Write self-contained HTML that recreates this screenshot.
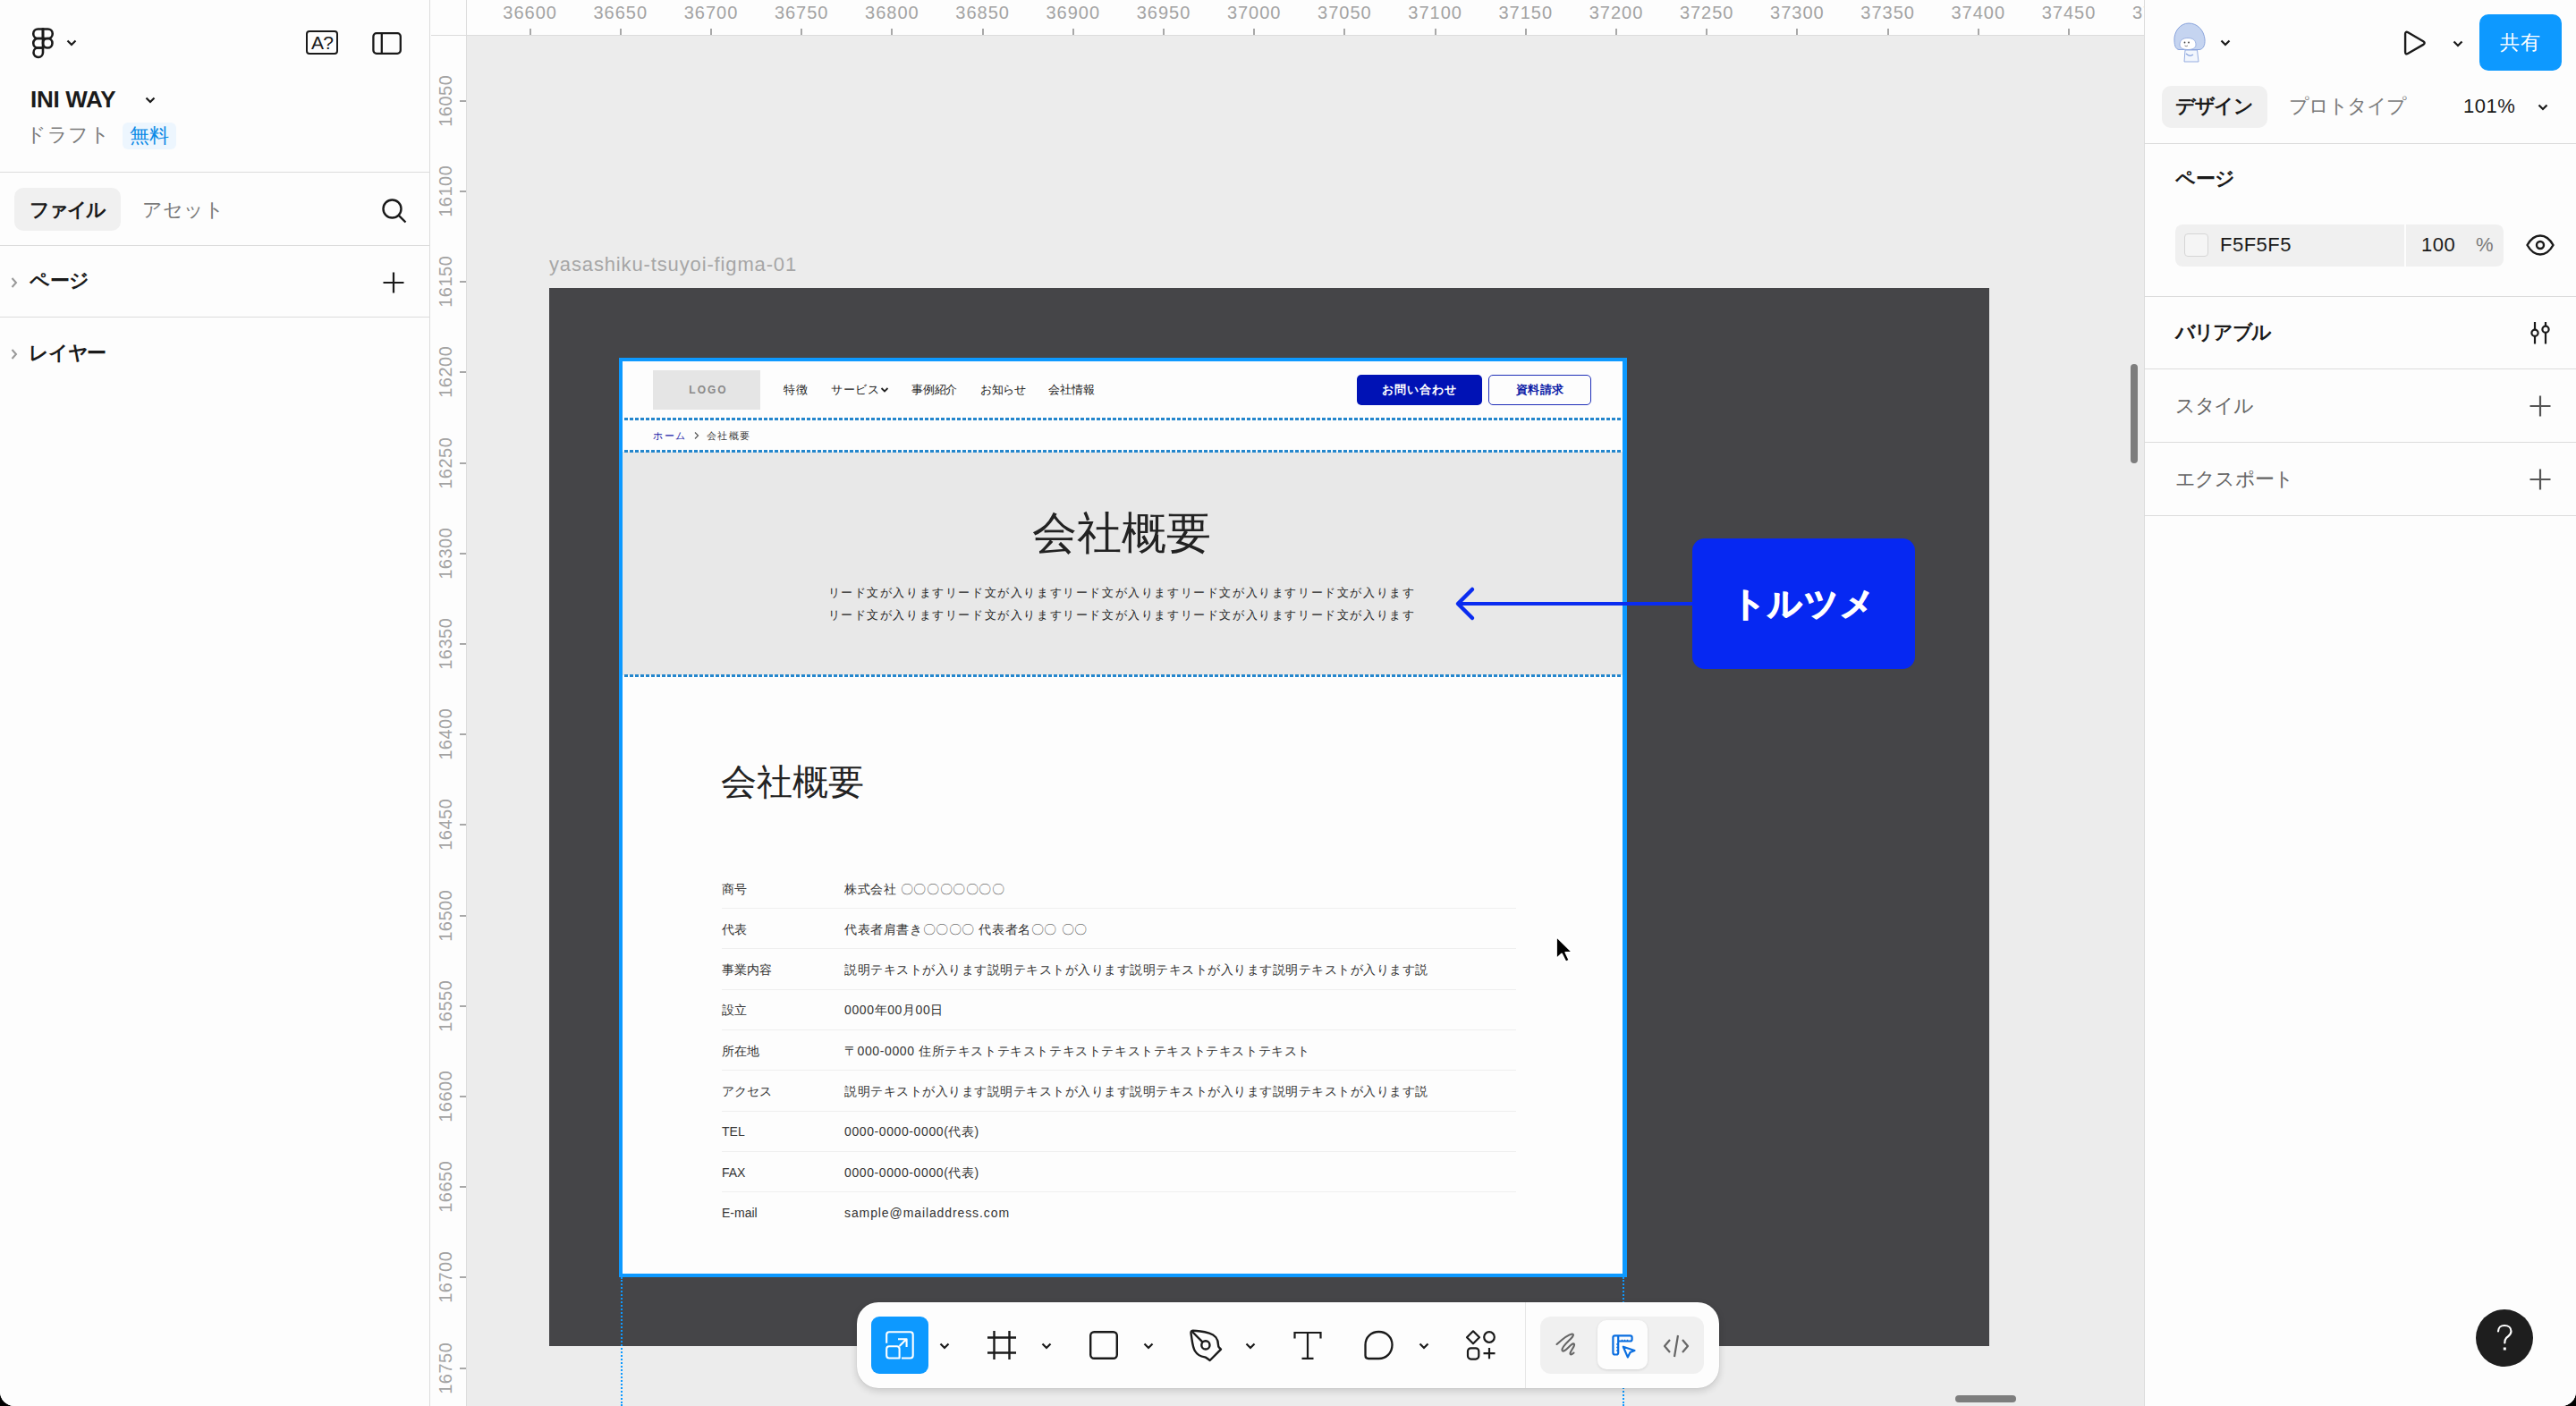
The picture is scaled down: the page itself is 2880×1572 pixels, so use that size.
<!DOCTYPE html>
<html><head><meta charset="utf-8">
<style>
*{box-sizing:border-box;margin:0;padding:0}
html,body{width:2880px;height:1572px;overflow:hidden;background:#000}
body{position:relative;font-family:"Liberation Sans",sans-serif;color:#1e1e1e}
.a{position:absolute}
#win{position:absolute;left:0;top:0;width:2880px;height:1572px;background:#fdfdfd;border-radius:0 0 16px 16px;overflow:hidden}
#canvas{position:absolute;left:522px;top:40px;width:1876px;height:1532px;background:#ececec;overflow:hidden}
.vl{position:absolute;width:1px;background:#dcdcdc}
.hl{position:absolute;height:1px;background:#dcdcdc}
.rx{position:absolute;top:4px;font-size:20px;line-height:20px;color:#a3a3a3;width:100px;text-align:center;letter-spacing:1px}
.tx{position:absolute;top:32px;width:2px;height:8px;background:#a8a8a8}
.ry{position:absolute;left:448px;font-size:20px;line-height:20px;color:#a3a3a3;width:100px;height:20px;text-align:center;transform:rotate(-90deg);letter-spacing:0.5px;text-indent:0.5px}
.ty{position:absolute;left:514px;height:2px;width:8px;background:#a8a8a8}
.dash{position:absolute;left:698px;width:1116px;height:2.5px;background:repeating-linear-gradient(90deg,#2486cc 0 4px,transparent 4px 6px)}
.nav{position:absolute;top:427px;font-size:12.5px;line-height:18px;color:#222;letter-spacing:0.5px}
.tl{position:absolute;left:807px;font-size:14px;line-height:20px;color:#333}
.tv{position:absolute;left:944px;font-size:14px;line-height:20px;color:#333;letter-spacing:0.6px;white-space:nowrap}
svg{display:block}
</style></head>
<body>
<div id="win">

<!-- LEFT PANEL -->
<div id="left" class="a" style="left:0;top:0;width:481px;height:1572px;background:#fdfdfd">
<svg class="a" style="left:35px;top:30px" width="26" height="36" viewBox="0 0 26 36"><g fill="none" stroke="#1a1a1a" stroke-width="2.6"><path d="M13 2.5 H7.5 A5.25 5.25 0 0 0 7.5 13 H13 Z"/><path d="M13 2.5 H18.5 A5.25 5.25 0 0 1 18.5 13 H13 Z"/><path d="M13 13 H7.5 A5.25 5.25 0 0 0 7.5 23.5 H13 Z"/><circle cx="18.25" cy="18.25" r="5.25"/><path d="M13 23.5 H7.5 A5.25 5.25 0 1 0 13 28.75 Z"/></g></svg>
<svg class="a" style="left:73px;top:42px" width="14" height="12" viewBox="0 0 14 12"><path d="M2.5 3.5 L7 8 L11.5 3.5" fill="none" stroke="#1a1a1a" stroke-width="2.2"/></svg>
<div class="a" style="left:342px;top:34px;width:36px;height:27px;border:2.4px solid #1a1a1a;border-radius:4px;font-size:21px;line-height:23px;text-align:center;color:#1a1a1a;letter-spacing:-0.8px">A?</div>
<svg class="a" style="left:414px;top:34px" width="36" height="28" viewBox="0 0 36 28"><rect x="3.4" y="3.2" width="30.4" height="22.6" rx="3.5" fill="none" stroke="#1a1a1a" stroke-width="2.3"/><path d="M12.8 3.2 V25.8" stroke="#1a1a1a" stroke-width="2.3"/></svg>
<div class="a" style="left:34px;top:96px;font-size:26px;line-height:30px;font-weight:bold;color:#1a1a1a;letter-spacing:-0.3px">INI WAY</div>
<svg class="a" style="left:161px;top:106px" width="14" height="12" viewBox="0 0 14 12"><path d="M2.5 3.5 L7 8 L11.5 3.5" fill="none" stroke="#1a1a1a" stroke-width="2.2"/></svg>
<div class="a" style="left:29px;top:137px;font-size:22px;line-height:28px;color:#7a7a7a;letter-spacing:0.6px">ドラフト</div>
<div class="a" style="left:137px;top:137px;width:60px;height:30px;background:#edf6fe;border-radius:6px;font-size:22px;line-height:30px;text-align:center;color:#0a8ae6">無料</div>
<div class="hl" style="left:0;top:192px;width:481px"></div>
<div class="a" style="left:16px;top:210px;width:119px;height:48px;background:#f0f0f0;border-radius:10px"></div>
<div class="a" style="left:33px;top:221px;font-size:22px;line-height:28px;font-weight:bold;color:#1a1a1a;letter-spacing:-1.9px">ファイル</div>
<div class="a" style="left:159px;top:221px;font-size:22px;line-height:28px;color:#7a7a7a;letter-spacing:0px">アセット</div>
<svg class="a" style="left:425px;top:220px" width="32" height="32" viewBox="0 0 32 32"><circle cx="13.5" cy="13.5" r="10" fill="none" stroke="#1a1a1a" stroke-width="2.4"/><path d="M20.8 20.8 L28.5 28.5" stroke="#1a1a1a" stroke-width="2.4"/></svg>
<div class="hl" style="left:0;top:274px;width:481px"></div>
<svg class="a" style="left:10px;top:308px" width="12" height="16" viewBox="0 0 12 16"><path d="M3.5 3 L8 8 L3.5 13" fill="none" stroke="#999" stroke-width="2"/></svg>
<div class="a" style="left:33px;top:300px;font-size:22px;line-height:28px;font-weight:bold;color:#1a1a1a;letter-spacing:-0.3px">ページ</div>
<svg class="a" style="left:426px;top:302px" width="28" height="28" viewBox="0 0 28 28"><path d="M14 2.5 V25.5 M2.5 14 H25.5" stroke="#1a1a1a" stroke-width="2.2"/></svg>
<div class="hl" style="left:0;top:354px;width:481px"></div>
<svg class="a" style="left:10px;top:388px" width="12" height="16" viewBox="0 0 12 16"><path d="M3.5 3 L8 8 L3.5 13" fill="none" stroke="#999" stroke-width="2"/></svg>
<div class="a" style="left:32px;top:381px;font-size:22px;line-height:28px;font-weight:bold;color:#1a1a1a;letter-spacing:-1.2px">レイヤー</div>
</div>
<div class="vl" style="left:480px;top:0;height:1572px"></div>

<!-- TOP RULER -->
<div class="a" style="left:482px;top:0;width:1916px;height:40px;background:#fdfdfd;overflow:hidden" id="rulerx"></div>
<div class="a" style="left:0;top:0;width:2398px;height:40px;overflow:hidden">
<div class="rx" style="left:542.6px">36600</div><div class="tx" style="left:591.6px"></div>
<div class="rx" style="left:643.8px">36650</div><div class="tx" style="left:692.8px"></div>
<div class="rx" style="left:745.0px">36700</div><div class="tx" style="left:794.0px"></div>
<div class="rx" style="left:846.2px">36750</div><div class="tx" style="left:895.2px"></div>
<div class="rx" style="left:947.4px">36800</div><div class="tx" style="left:996.4px"></div>
<div class="rx" style="left:1048.6px">36850</div><div class="tx" style="left:1097.6px"></div>
<div class="rx" style="left:1149.8px">36900</div><div class="tx" style="left:1198.8px"></div>
<div class="rx" style="left:1251.0px">36950</div><div class="tx" style="left:1300.0px"></div>
<div class="rx" style="left:1352.2px">37000</div><div class="tx" style="left:1401.2px"></div>
<div class="rx" style="left:1453.4px">37050</div><div class="tx" style="left:1502.4px"></div>
<div class="rx" style="left:1554.6px">37100</div><div class="tx" style="left:1603.6px"></div>
<div class="rx" style="left:1655.8px">37150</div><div class="tx" style="left:1704.8px"></div>
<div class="rx" style="left:1757.0px">37200</div><div class="tx" style="left:1806.0px"></div>
<div class="rx" style="left:1858.2px">37250</div><div class="tx" style="left:1907.2px"></div>
<div class="rx" style="left:1959.4px">37300</div><div class="tx" style="left:2008.4px"></div>
<div class="rx" style="left:2060.6px">37350</div><div class="tx" style="left:2109.6px"></div>
<div class="rx" style="left:2161.8px">37400</div><div class="tx" style="left:2210.8px"></div>
<div class="rx" style="left:2263.0px">37450</div><div class="tx" style="left:2312.0px"></div>
<div class="rx" style="left:2364.2px">37500</div><div class="tx" style="left:2413.2px"></div>
</div>
<div class="hl" style="left:482px;top:39px;width:1916px"></div>
<!-- LEFT RULER -->
<div class="a" style="left:482px;top:40px;width:40px;height:1532px;background:#fdfdfd;overflow:hidden" id="rulery"></div>
<div class="a" style="left:0;top:40px;width:522px;height:1532px;overflow:hidden"><div class="a" style="left:0;top:-40px;width:522px;height:1612px">
<div class="ry" style="top:102.8px">16050</div><div class="ty" style="top:111.8px"></div>
<div class="ry" style="top:204.0px">16100</div><div class="ty" style="top:213.0px"></div>
<div class="ry" style="top:305.2px">16150</div><div class="ty" style="top:314.2px"></div>
<div class="ry" style="top:406.4px">16200</div><div class="ty" style="top:415.4px"></div>
<div class="ry" style="top:507.6px">16250</div><div class="ty" style="top:516.6px"></div>
<div class="ry" style="top:608.8px">16300</div><div class="ty" style="top:617.8px"></div>
<div class="ry" style="top:710.0px">16350</div><div class="ty" style="top:719.0px"></div>
<div class="ry" style="top:811.2px">16400</div><div class="ty" style="top:820.2px"></div>
<div class="ry" style="top:912.4px">16450</div><div class="ty" style="top:921.4px"></div>
<div class="ry" style="top:1013.6px">16500</div><div class="ty" style="top:1022.6px"></div>
<div class="ry" style="top:1114.8px">16550</div><div class="ty" style="top:1123.8px"></div>
<div class="ry" style="top:1216.0px">16600</div><div class="ty" style="top:1225.0px"></div>
<div class="ry" style="top:1317.2px">16650</div><div class="ty" style="top:1326.2px"></div>
<div class="ry" style="top:1418.4px">16700</div><div class="ty" style="top:1427.4px"></div>
<div class="ry" style="top:1519.6px">16750</div><div class="ty" style="top:1528.6px"></div>
</div></div>
<div class="vl" style="left:521px;top:0;height:1572px"></div>

<!-- CANVAS -->
<div id="canvas"></div>
<!-- frame label & dark frame -->
<div class="a" style="left:614px;top:283px;font-size:22px;line-height:26px;color:#a6a6a6;letter-spacing:0.86px">yasashiku-tsuyoi-figma-01</div>
<div class="a" style="left:614px;top:322px;width:1610px;height:1183px;background:#454548"></div>
<!-- WEBSITE FRAME -->
<div class="a" style="left:692px;top:400px;width:1127px;height:1028px;background:#0d99ff"></div>
<div class="a" style="left:696px;top:404px;width:1118px;height:1020px;background:#fdfdfd;overflow:hidden">
</div>
<div class="a" style="left:696px;top:505px;width:1118px;height:250px;background:#e8e8e8"></div>
<div class="dash" style="top:467.3px"></div>
<div class="dash" style="top:503.2px"></div>
<div class="dash" style="top:754px"></div>
<!-- header -->
<div class="a" style="left:730px;top:414px;width:120px;height:44px;background:#e5e5e5;font-size:12px;line-height:44px;text-align:center;font-weight:bold;color:#8a8a8a;letter-spacing:2px;text-indent:4px">LOGO</div>
<div class="nav" style="left:876px">特徴</div>
<div class="nav" style="left:929px">サービス</div>
<svg class="a" style="left:984px;top:432px" width="10" height="8" viewBox="0 0 10 8"><path d="M1.5 2 L5 5.5 L8.5 2" fill="none" stroke="#222" stroke-width="1.8"/></svg>
<div class="nav" style="left:1019px;letter-spacing:-0.2px">事例紹介</div>
<div class="nav" style="left:1096px;letter-spacing:-0.3px">お知らせ</div>
<div class="nav" style="left:1172px;letter-spacing:0px">会社情報</div>
<div class="a" style="left:1517px;top:419px;width:140px;height:34px;background:#0012b5;border-radius:5px;color:#fff;font-size:13px;font-weight:bold;line-height:34px;text-align:center;letter-spacing:1px">お問い合わせ</div>
<div class="a" style="left:1664px;top:419px;width:115px;height:34px;border:1.5px solid #1f2fb8;border-radius:5px;color:#0f1fa8;font-size:13px;font-weight:bold;line-height:31px;text-align:center;letter-spacing:0.5px">資料請求</div>
<!-- breadcrumb -->
<div class="a" style="left:730px;top:478px;font-size:11px;line-height:18px;color:#1c24a8;letter-spacing:1.5px">ホーム</div>
<svg class="a" style="left:775px;top:482px" width="8" height="10" viewBox="0 0 8 10"><path d="M2 1.5 L5.5 5 L2 8.5" fill="none" stroke="#555" stroke-width="1.2"/></svg>
<div class="a" style="left:790px;top:478px;font-size:11px;line-height:18px;color:#444;letter-spacing:1.3px">会社概要</div>
<!-- hero -->
<div class="a" style="left:1054px;top:566px;width:400px;text-align:center;font-size:50px;line-height:60px;color:#222">会社概要</div>
<div class="a" style="left:904px;top:651px;width:700px;text-align:center;font-size:13px;line-height:24.5px;color:#262626;letter-spacing:1.6px">リード文が入りますリード文が入りますリード文が入りますリード文が入りますリード文が入ります<br>リード文が入りますリード文が入りますリード文が入りますリード文が入りますリード文が入ります</div>
<!-- content -->
<div class="a" style="left:806px;top:850px;font-size:40px;line-height:48px;color:#222">会社概要</div>
<div class="tl" style="top:983.5px">商号</div><div class="tv" style="top:983.5px">株式会社 〇〇〇〇〇〇〇〇</div>
<div class="a" style="left:807px;top:1015.0px;width:888px;height:1px;background:#efefef"></div>
<div class="tl" style="top:1028.8px">代表</div><div class="tv" style="top:1028.8px">代表者肩書き〇〇〇〇 代表者名〇〇 〇〇</div>
<div class="a" style="left:807px;top:1060.3px;width:888px;height:1px;background:#efefef"></div>
<div class="tl" style="top:1074.1px">事業内容</div><div class="tv" style="top:1074.1px;letter-spacing:0.5px">説明テキストが入ります説明テキストが入ります説明テキストが入ります説明テキストが入ります説</div>
<div class="a" style="left:807px;top:1105.6px;width:888px;height:1px;background:#efefef"></div>
<div class="tl" style="top:1119.4px">設立</div><div class="tv" style="top:1119.4px">0000年00月00日</div>
<div class="a" style="left:807px;top:1150.9px;width:888px;height:1px;background:#efefef"></div>
<div class="tl" style="top:1164.7px">所在地</div><div class="tv" style="top:1164.7px">〒000-0000 住所テキストテキストテキストテキストテキストテキストテキスト</div>
<div class="a" style="left:807px;top:1196.2px;width:888px;height:1px;background:#efefef"></div>
<div class="tl" style="top:1210.0px">アクセス</div><div class="tv" style="top:1210.0px;letter-spacing:0.5px">説明テキストが入ります説明テキストが入ります説明テキストが入ります説明テキストが入ります説</div>
<div class="a" style="left:807px;top:1241.5px;width:888px;height:1px;background:#efefef"></div>
<div class="tl" style="top:1255.3px">TEL</div><div class="tv" style="top:1255.3px">0000-0000-0000(代表)</div>
<div class="a" style="left:807px;top:1286.8px;width:888px;height:1px;background:#efefef"></div>
<div class="tl" style="top:1300.6px">FAX</div><div class="tv" style="top:1300.6px">0000-0000-0000(代表)</div>
<div class="a" style="left:807px;top:1332.1px;width:888px;height:1px;background:#efefef"></div>
<div class="tl" style="top:1345.9px">E-mail</div><div class="tv" style="top:1345.9px;letter-spacing:0.9px">sample@mailaddress.com</div>

<!-- annotation -->
<div class="a" style="left:1630px;top:673px;width:262px;height:4px;background:#0a2cf0"></div>
<svg class="a" style="left:1620px;top:650px" width="40" height="50" viewBox="0 0 40 50"><path d="M26 9 L10 25 L26 41" fill="none" stroke="#0a2cf0" stroke-width="4.5" stroke-linecap="round" stroke-linejoin="round"/></svg>
<div class="a" style="left:1892px;top:602px;width:249px;height:146px;background:#0628f2;border-radius:14px;color:#fff;font-size:38px;font-weight:bold;line-height:146px;text-align:center;letter-spacing:1.5px;-webkit-text-stroke:1.2px #fff">トルツメ</div>
<!-- cursor -->
<svg class="a" style="left:1736px;top:1043px" width="30" height="40" viewBox="0 0 30 40"><path d="M4 4 L4 29 L10 23.5 L14.5 32.5 L18.5 30.5 L14.3 21.8 L22 21.8 Z" fill="#000" stroke="#fff" stroke-width="1.8" stroke-linejoin="round"/></svg>
<!-- dotted guides -->
<div class="a" style="left:694px;top:1428px;width:0;height:144px;border-left:2px dotted #0d99ff"></div>
<div class="a" style="left:1814px;top:1428px;width:0;height:144px;border-left:2px dotted #0d99ff"></div>
<!-- scrollbars -->
<div class="a" style="left:2382px;top:407px;width:8px;height:111px;background:#7d7d7d;border-radius:4px"></div>
<div class="a" style="left:2186px;top:1560px;width:68px;height:8px;background:#7d7d7d;border-radius:4px"></div>
<!-- TOOLBAR -->
<div class="a" style="left:958px;top:1456px;width:964px;height:96px;background:#fdfdfd;border-radius:24px;box-shadow:0 3px 8px rgba(0,0,0,0.16),0 0 1px rgba(0,0,0,0.2)"></div>
<div class="a" style="left:974px;top:1472px;width:64px;height:64px;background:#0d99ff;border-radius:9px"></div>
<svg class="a" style="left:986px;top:1484px" width="40" height="40" viewBox="0 0 40 40"><g fill="none" stroke="#fff" stroke-width="2.1" stroke-linejoin="round"><path d="M5.2 17.8 V8.2 Q5.2 5.2 8.2 5.2 H31.7 Q34.7 5.2 34.7 8.2 V31.5 Q34.7 34.5 31.7 34.5 H22"/><path d="M5.2 24.2 Q5.2 21.2 8.2 21.2 H16.6 Q19.6 21.2 19.6 24.2 V34.5 H8.2 Q5.2 34.5 5.2 31.5 Z"/><path d="M19.6 21 L27.6 13 M18 13.2 H27.6 V22"/></g></svg>
<svg class="a" style="left:1049px;top:1499px" width="14" height="12" viewBox="0 0 14 12"><path d="M2.5 3.5 L7 8 L11.5 3.5" fill="none" stroke="#1a1a1a" stroke-width="2.2"/></svg>
<svg class="a" style="left:1102px;top:1486px" width="36" height="36" viewBox="0 0 36 36"><path d="M9.5 2 V34 M26.5 2 V34 M2 9.5 H34 M2 26.5 H34" stroke="#1a1a1a" stroke-width="2.4"/></svg>
<svg class="a" style="left:1163px;top:1499px" width="14" height="12" viewBox="0 0 14 12"><path d="M2.5 3.5 L7 8 L11.5 3.5" fill="none" stroke="#1a1a1a" stroke-width="2.2"/></svg>
<svg class="a" style="left:1216px;top:1486px" width="36" height="36" viewBox="0 0 36 36"><rect x="3.2" y="3.2" width="29.6" height="29.6" rx="4" fill="none" stroke="#1a1a1a" stroke-width="2.4"/></svg>
<svg class="a" style="left:1277px;top:1499px" width="14" height="12" viewBox="0 0 14 12"><path d="M2.5 3.5 L7 8 L11.5 3.5" fill="none" stroke="#1a1a1a" stroke-width="2.2"/></svg>
<svg class="a" style="left:1328px;top:1484px" width="40" height="40" viewBox="0 0 40 40"><g fill="none" stroke="#1a1a1a" stroke-width="2.4" stroke-linejoin="round"><path d="M5.5 3.8 C3.8 3.8 3.2 5.2 3.6 7.2 C4.8 14 5 21.5 8 26.5 C10.5 30.8 14 32.6 19 33.4 Q20.5 33.7 21.6 34.8 L24.7 37 L37 24.6 L35 22.6 Q34 21.6 34 19.6 C34 13 30 8.2 24 6.6 C18 5 11.5 3.8 5.5 3.8 Z"/><path d="M5 5 L16.6 16.6"/><circle cx="19.9" cy="19.9" r="4.6"/></g></svg>
<svg class="a" style="left:1391px;top:1499px" width="14" height="12" viewBox="0 0 14 12"><path d="M2.5 3.5 L7 8 L11.5 3.5" fill="none" stroke="#1a1a1a" stroke-width="2.2"/></svg>
<svg class="a" style="left:1442px;top:1486px" width="40" height="36" viewBox="0 0 40 36"><path d="M5.5 10.5 V4 H34.5 V10.5 M20 4 V32.8 M13.5 32.8 H26.5" fill="none" stroke="#1a1a1a" stroke-width="2.2"/></svg>
<svg class="a" style="left:1523px;top:1486px" width="38" height="36" viewBox="0 0 38 36"><path d="M3.5 29.5 V17.5 C3.5 9 10 3 18.5 3 C27 3 33.5 9 33.5 17.5 C33.5 26.5 27 33 18.5 33 H7 C5 33 3.5 31.5 3.5 29.5 Z" fill="none" stroke="#1a1a1a" stroke-width="2.3" stroke-linejoin="round"/></svg>
<svg class="a" style="left:1585px;top:1499px" width="14" height="12" viewBox="0 0 14 12"><path d="M2.5 3.5 L7 8 L11.5 3.5" fill="none" stroke="#1a1a1a" stroke-width="2.2"/></svg>
<svg class="a" style="left:1637px;top:1485px" width="38" height="38" viewBox="0 0 38 38"><g fill="none" stroke="#1a1a1a" stroke-width="2.2" stroke-linejoin="round"><path d="M10 3.3 L17 10.3 L10 17.3 L3 10.3 Z"/><circle cx="28" cy="10" r="5.8"/><rect x="4" y="22.3" width="12.3" height="12.3" rx="3.5"/><path d="M28 22 V34.3 M21.5 28.2 H34.5"/></g></svg>
<div class="a" style="left:1705px;top:1456px;width:1px;height:96px;background:#e6e6e6"></div>
<div class="a" style="left:1722px;top:1472px;width:183px;height:64px;background:#f0f0f0;border-radius:12px"></div>
<svg class="a" style="left:1738px;top:1488px" width="30" height="32" viewBox="0 0 30 32"><path d="M2.5 15 C8 10 15 4 19.5 3.5 C22 3.5 21 6 18 9 C14 13 8 18 8.5 21.5 C9 24 12 22 15 19 C18 16 21 13 22 15 C23 17 18 22 17.5 25 C17.5 27 19 27 21.5 24.5" fill="none" stroke="#666" stroke-width="2.1" stroke-linecap="round" stroke-linejoin="round"/></svg>
<div class="a" style="left:1786px;top:1476px;width:56px;height:55px;background:#fdfdfd;border-radius:10px;box-shadow:0 1px 3px rgba(0,0,0,0.12)"></div>
<svg class="a" style="left:1799px;top:1490px" width="32" height="30" viewBox="0 0 32 30"><g fill="none" stroke="#0a6ee0" stroke-width="2.2" stroke-linejoin="round"><path d="M4.4 22.5 V5.3 Q4.4 3.3 6.4 3.3 H23.6 Q25.6 3.3 25.6 5.3 V7.5 Q25.6 9.5 23.6 9.5 H10.2 V22.5 Q10.2 24.5 8.2 24.5 H6.4 Q4.4 24.5 4.4 22.5 Z M10.2 3.3 V9.5"/><path d="M15.8 15.7 L28.5 20 L23.6 22 L20.8 27.4 Z"/></g><path d="M14.5 7.8 V9.5 M17.5 7.8 V9.5 M20.5 7.8 V9.5 M8.2 13 H10.2 M8.2 16.5 H10.2 M8.2 20 H10.2" stroke="#0a6ee0" stroke-width="1.4"/></svg>
<svg class="a" style="left:1858px;top:1490px" width="32" height="30" viewBox="0 0 32 30"><path d="M9 8 L3 15 L9 22 M23 8 L29 15 L23 22 M18 3 L14 27" fill="none" stroke="#666" stroke-width="2.2" stroke-linejoin="round"/></svg>

<!-- RIGHT PANEL -->
<div id="right" class="a" style="left:2399px;top:0;width:481px;height:1572px;background:#fdfdfd"></div>
<!-- avatar -->
<svg class="a" style="left:2428px;top:24px" width="40" height="48" viewBox="0 0 40 48"><path d="M3 22 C2 12 9 2 19 2 C29 2 36 10 37 20 C37.5 27 35 31 31 31.5 L8 31.5 C4.5 31 3.2 27 3 22 Z" fill="#c5d4f0" stroke="#8aa4dc" stroke-width="1"/><path d="M9 26 C9 21 12.5 18.5 18 18.5 C23.5 18.5 27 21 27 26 C27 29.5 23.5 31.5 18 31.5 C12.5 31.5 9 29.5 9 26 Z" fill="#fff" stroke="#8aa4dc" stroke-width="0.8"/><circle cx="14.5" cy="23.5" r="0.9" fill="#444"/><circle cx="19" cy="23.5" r="0.9" fill="#444"/><path d="M14.5 27 Q16 28.5 18 27" fill="none" stroke="#555" stroke-width="0.7"/><path d="M15 32 L14 45 L30 45 L28.5 32 Z" fill="#f2f6fd" stroke="#8aa4dc" stroke-width="0.9"/><path d="M16 36 Q20 40 24 37" fill="none" stroke="#8aa4dc" stroke-width="1.2"/></svg>
<svg class="a" style="left:2481px;top:42px" width="14" height="12" viewBox="0 0 14 12"><path d="M2.5 3.5 L7 8 L11.5 3.5" fill="none" stroke="#1a1a1a" stroke-width="2.2"/></svg>
<svg class="a" style="left:2684px;top:32px" width="32" height="32" viewBox="0 0 32 32"><path d="M8.2 4.3 C6.2 3.1 5.1 3.9 5.1 6.1 V26 C5.1 28.2 6.2 28.9 8.2 27.8 L25.3 17.9 C27.1 16.8 27.1 15.3 25.3 14.2 Z" fill="none" stroke="#1a1a1a" stroke-width="2.4" stroke-linejoin="round"/></svg>
<svg class="a" style="left:2741px;top:43px" width="14" height="12" viewBox="0 0 14 12"><path d="M2.5 3.5 L7 8 L11.5 3.5" fill="none" stroke="#1a1a1a" stroke-width="2.2"/></svg>
<div class="a" style="left:2772px;top:16px;width:92px;height:63px;background:#0d99ff;border-radius:10px;color:#fff;font-size:22px;line-height:63px;text-align:center;letter-spacing:1px">共有</div>
<div class="a" style="left:2417px;top:96px;width:118px;height:47px;background:#f0f0f0;border-radius:10px"></div>
<div class="a" style="left:2432px;top:105px;font-size:22px;line-height:28px;font-weight:bold;color:#1a1a1a;letter-spacing:-1.5px">デザイン</div>
<div class="a" style="left:2559px;top:105px;font-size:22px;line-height:28px;color:#7a7a7a;letter-spacing:-1.2px">プロトタイプ</div>
<div class="a" style="left:2754px;top:105px;font-size:22px;line-height:28px;color:#1a1a1a;letter-spacing:0.5px">101%</div>
<svg class="a" style="left:2836px;top:114px" width="14" height="12" viewBox="0 0 14 12"><path d="M2.5 3.5 L7 8 L11.5 3.5" fill="none" stroke="#1a1a1a" stroke-width="2.2"/></svg>
<div class="hl" style="left:2398px;top:160px;width:482px"></div>
<div class="a" style="left:2432px;top:186px;font-size:22px;line-height:28px;font-weight:bold;color:#1a1a1a;letter-spacing:-0.3px">ページ</div>
<div class="a" style="left:2432px;top:251px;width:367px;height:47px;background:#f0f0f0;border-radius:8px"></div>
<div class="a" style="left:2688px;top:251px;width:2px;height:47px;background:#fdfdfd"></div>
<div class="a" style="left:2442px;top:261px;width:27px;height:26px;background:#f5f5f5;border:1.5px solid #d6d6d6;border-radius:4px"></div>
<div class="a" style="left:2482px;top:260px;font-size:22px;line-height:28px;color:#1a1a1a;letter-spacing:0.5px">F5F5F5</div>
<div class="a" style="left:2707px;top:260px;font-size:22px;line-height:28px;color:#1a1a1a;letter-spacing:0.5px">100</div>
<div class="a" style="left:2768px;top:260px;font-size:22px;line-height:28px;color:#7a7a7a">%</div>
<svg class="a" style="left:2822px;top:258px" width="36" height="32" viewBox="0 0 36 32"><path d="M3.5 16 C8 8 13 5.5 18 5.5 C23 5.5 28 8 32.5 16 C28 24 23 26.5 18 26.5 C13 26.5 8 24 3.5 16 Z" fill="none" stroke="#1a1a1a" stroke-width="2.4"/><circle cx="18" cy="16" r="4" fill="none" stroke="#1a1a1a" stroke-width="2.4"/></svg>
<div class="hl" style="left:2398px;top:331px;width:482px"></div>
<div class="a" style="left:2432px;top:358px;font-size:22px;line-height:28px;color:#1a1a1a;letter-spacing:-1.8px;font-weight:bold">バリアブル</div>
<svg class="a" style="left:2824px;top:356px" width="32" height="32" viewBox="0 0 32 32"><g fill="none" stroke="#1a1a1a" stroke-width="2.2"><path d="M10 4 V12.5 M10 20 V28.5 M22 4 V8.5 M22 16 V28.5"/><circle cx="10" cy="16.2" r="3.6"/><circle cx="22" cy="12.2" r="3.6"/></g></svg>
<div class="hl" style="left:2398px;top:412px;width:482px"></div>
<div class="a" style="left:2432px;top:440px;font-size:22px;line-height:28px;color:#666;letter-spacing:-1.5px">スタイル</div>
<svg class="a" style="left:2826px;top:440px" width="28" height="28" viewBox="0 0 28 28"><path d="M14 2.5 V25.5 M2.5 14 H25.5" stroke="#555" stroke-width="2.2"/></svg>
<div class="hl" style="left:2398px;top:494px;width:482px"></div>
<div class="a" style="left:2432px;top:522px;font-size:22px;line-height:28px;color:#666;letter-spacing:-0.8px">エクスポート</div>
<svg class="a" style="left:2826px;top:522px" width="28" height="28" viewBox="0 0 28 28"><path d="M14 2.5 V25.5 M2.5 14 H25.5" stroke="#555" stroke-width="2.2"/></svg>
<div class="hl" style="left:2398px;top:576px;width:482px"></div>
<svg class="a" style="left:2768px;top:1464px" width="64" height="64" viewBox="0 0 64 64"><circle cx="32" cy="32" r="32" fill="#1e1e1e"/><path d="M25 24.5 C25 20.5 28 18 32 18 C36.5 18 39.5 20.8 39.5 24.5 C39.5 28.5 36 30 34 32 C32.8 33.3 32.3 34.8 32.3 37.5" fill="none" stroke="#fff" stroke-width="2.2" stroke-linecap="round"/><rect x="30.8" y="42.5" width="3" height="3" fill="#fff"/></svg>
<div class="vl" style="left:2397px;top:0;height:1572px"></div>

</div>
</body></html>
